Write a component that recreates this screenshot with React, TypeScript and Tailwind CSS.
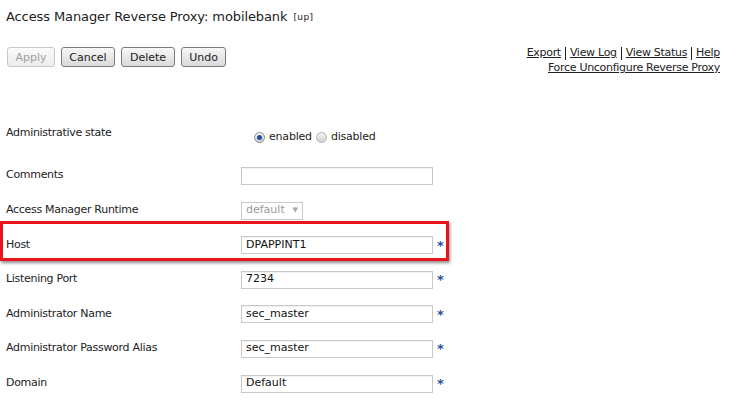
import React from 'react'

const font = { fontFamily: '"DejaVu Sans", Verdana, sans-serif' }

function Btn({ label, disabled, w }: { label: string; disabled?: boolean; w: string }) {
  return (
    <button
      className={
        'h-[20px] rounded-[3px] border text-[11px] leading-none bg-gradient-to-b from-[#f7f7f7] to-[#dadada] ' +
        w +
        (disabled ? ' border-[#c8c8c8] text-[#a0a0a0] from-[#fbfbfb] to-[#ececec]' : ' border-[#7a7a7a] text-[#222]')
      }
    >
      {label}
    </button>
  )
}

function Field({ value, star = true }: { value?: string; star?: boolean }) {
  return (
    <div className="flex items-center">
      <div className="w-[192px] h-[18px] border border-[#c9c9c9] bg-white shadow-[inset_0_1px_1px_rgba(0,0,0,0.06)] flex items-center px-[4px] text-[11px] text-[#111]">
        {value}
      </div>
      {star && <span className="ml-[4px] text-[13px] font-bold text-[#2c4f9e] leading-none">*</span>}
    </div>
  )
}

function Row({ label, h, children }: { label: string; h: string; children: React.ReactNode }) {
  return (
    <div className={'flex items-center ' + h}>
      <div className="w-[241px] pl-[6px] text-[11px] text-[#222] tracking-[-0.3px]">{label}</div>
      {children}
    </div>
  )
}

export default function App() {
  return (
    <div className="w-[736px] h-[408px] bg-white overflow-hidden relative" style={font}>
      <div className="pl-[6px] pt-[7px] h-[40px] flex items-start">
        <span className="text-[13px] text-[#222] tracking-[-0.1px]">Access Manager Reverse Proxy: mobilebank</span>
        <span className="ml-[6px] mt-[4px] text-[9px] text-[#222] tracking-[0.4px]">[up]</span>
      </div>

      <div className="flex justify-between pl-[7px] pr-[16px] h-[70px]">
        <div className="flex gap-[6px] pt-[7px]">
          <Btn label="Apply" disabled w="w-[48px]" />
          <Btn label="Cancel" w="w-[54px]" />
          <Btn label="Delete" w="w-[54px]" />
          <Btn label="Undo" w="w-[45px]" />
        </div>
        <div className="flex flex-col items-end pt-[6px] text-[11px] text-[#222] leading-[14px] tracking-[-0.3px]">
          <div className="flex items-center">
            <a className="underline">Export</a>
            <span className="mx-[4px] w-px h-[13px] bg-[#222]" />
            <a className="underline">View Log</a>
            <span className="mx-[4px] w-px h-[13px] bg-[#222]" />
            <a className="underline">View Status</a>
            <span className="mx-[4px] w-px h-[13px] bg-[#222]" />
            <a className="underline">Help</a>
          </div>
          <a className="underline mt-[1px]">Force Unconfigure Reverse Proxy</a>
        </div>
      </div>

      <div className="flex flex-col">
        <Row label="Administrative state" h="h-[49px] -mt-[1px]">
          <div className="flex items-center mt-[8px] ml-[13px] text-[11px] text-[#222] tracking-[-0.2px]">
            <span className="w-[11px] h-[11px] rounded-full border border-[#8a8a8a] bg-gradient-to-b from-[#f4f4f4] to-[#d0d0d0] flex items-center justify-center">
              <span className="w-[5px] h-[5px] rounded-full bg-[#1f4f9a]" />
            </span>
            <span className="ml-[4px]">enabled</span>
            <span className="ml-[4px] w-[11px] h-[11px] rounded-full border border-[#b0b0b0] bg-gradient-to-b from-[#f4f4f4] to-[#d0d0d0]" />
            <span className="ml-[4px]">disabled</span>
          </div>
        </Row>
        <Row label="Comments" h="h-[35px]">
          <Field star={false} />
        </Row>
        <Row label="Access Manager Runtime" h="h-[35px]">
          <div className="w-[62px] h-[18px] border border-[#c9c9c9] bg-white flex items-center justify-between px-[4px] text-[11px] text-[#999]">
            <span>default</span>
            <span className="text-[7px] text-[#aaa]">▼</span>
          </div>
        </Row>
        <div className="relative">
          <Row label="Host" h="h-[34px]">
            <Field value="DPAPPINT1" />
          </Row>
          <div className="absolute left-0 top-[-7px] w-[449px] h-[40px] border-[3px] border-[#e8141b] shadow-[1px_2px_3px_rgba(0,0,0,0.45)] pointer-events-none" />
        </div>
        <Row label="Listening Port" h="h-[35px]">
          <Field value="7234" />
        </Row>
        <Row label="Administrator Name" h="h-[34px]">
          <Field value="sec_master" />
        </Row>
        <Row label="Administrator Password Alias" h="h-[35px]">
          <Field value="sec_master" />
        </Row>
        <Row label="Domain" h="h-[35px]">
          <Field value="Default" />
        </Row>
      </div>
    </div>
  )
}
